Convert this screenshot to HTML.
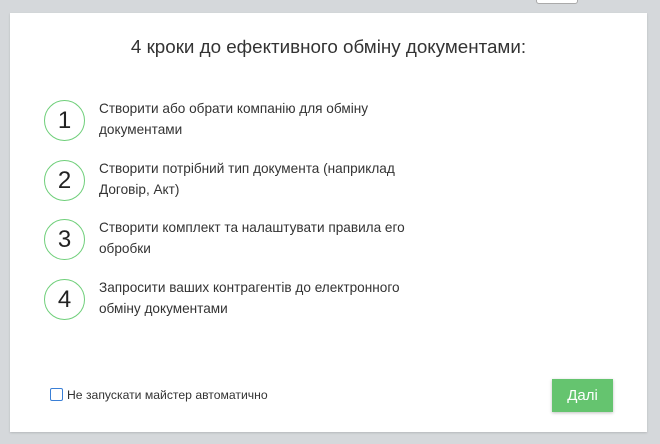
<!DOCTYPE html>
<html><head><style>
body{margin:0;width:660px;height:444px;background:#d5d8db;font-family:"Liberation Sans",sans-serif;position:relative;overflow:hidden}
.top{position:absolute;left:536px;top:-6px;width:40px;height:8px;border:1px solid #aaa;border-radius:3px;background:#fff}
.panel{position:absolute;left:10px;top:13px;width:637px;height:419px;background:#fff;box-shadow:0 1px 2px rgba(0,0,0,.15)}
h1{position:absolute;left:0;width:100%;top:23px;margin:0;text-align:center;font-weight:normal;font-size:18.8px;color:#333}
.step{position:absolute;left:34px}
.c{position:absolute;left:0;width:39px;height:39px;border:1px solid #6fcf7a;border-radius:50%;text-align:center;line-height:39px;font-size:24px;color:#222}
.t{position:absolute;left:55px;width:340px;font-size:13.6px;line-height:21px;color:#333}
.cb{position:absolute;left:40px;top:375px;width:11px;height:11px;border:1.5px solid #3a7fd6;border-radius:2px}
.lbl{position:absolute;left:57px;top:375px;font-size:12.2px;color:#333}
.btn{position:absolute;left:542px;top:366px;width:61px;height:33px;background:#65c46f;color:#fff;font-size:15px;text-align:center;line-height:33px;box-shadow:0 1px 3px rgba(0,0,0,.25)}
</style></head><body>
<div class="top"></div>
<div class="panel">
<h1>4 кроки до ефективного обміну документами:</h1>
<div class="step" style="top:87px"><div class="c">1</div><div class="t" style="top:-2px">Створити або обрати компанію для обміну<br>документами</div></div>
<div class="step" style="top:147px"><div class="c">2</div><div class="t" style="top:-2px">Створити потрібний тип документа (наприклад<br>Договір, Акт)</div></div>
<div class="step" style="top:206px"><div class="c">3</div><div class="t" style="top:-2px">Створити комплект та налаштувати правила его<br>обробки</div></div>
<div class="step" style="top:266px"><div class="c">4</div><div class="t" style="top:-2px">Запросити ваших контрагентів до електронного<br>обміну документами</div></div>
<div class="cb"></div><div class="lbl">Не запускати майстер автоматично</div>
<div class="btn">Далі</div>
</div>
</body></html>
